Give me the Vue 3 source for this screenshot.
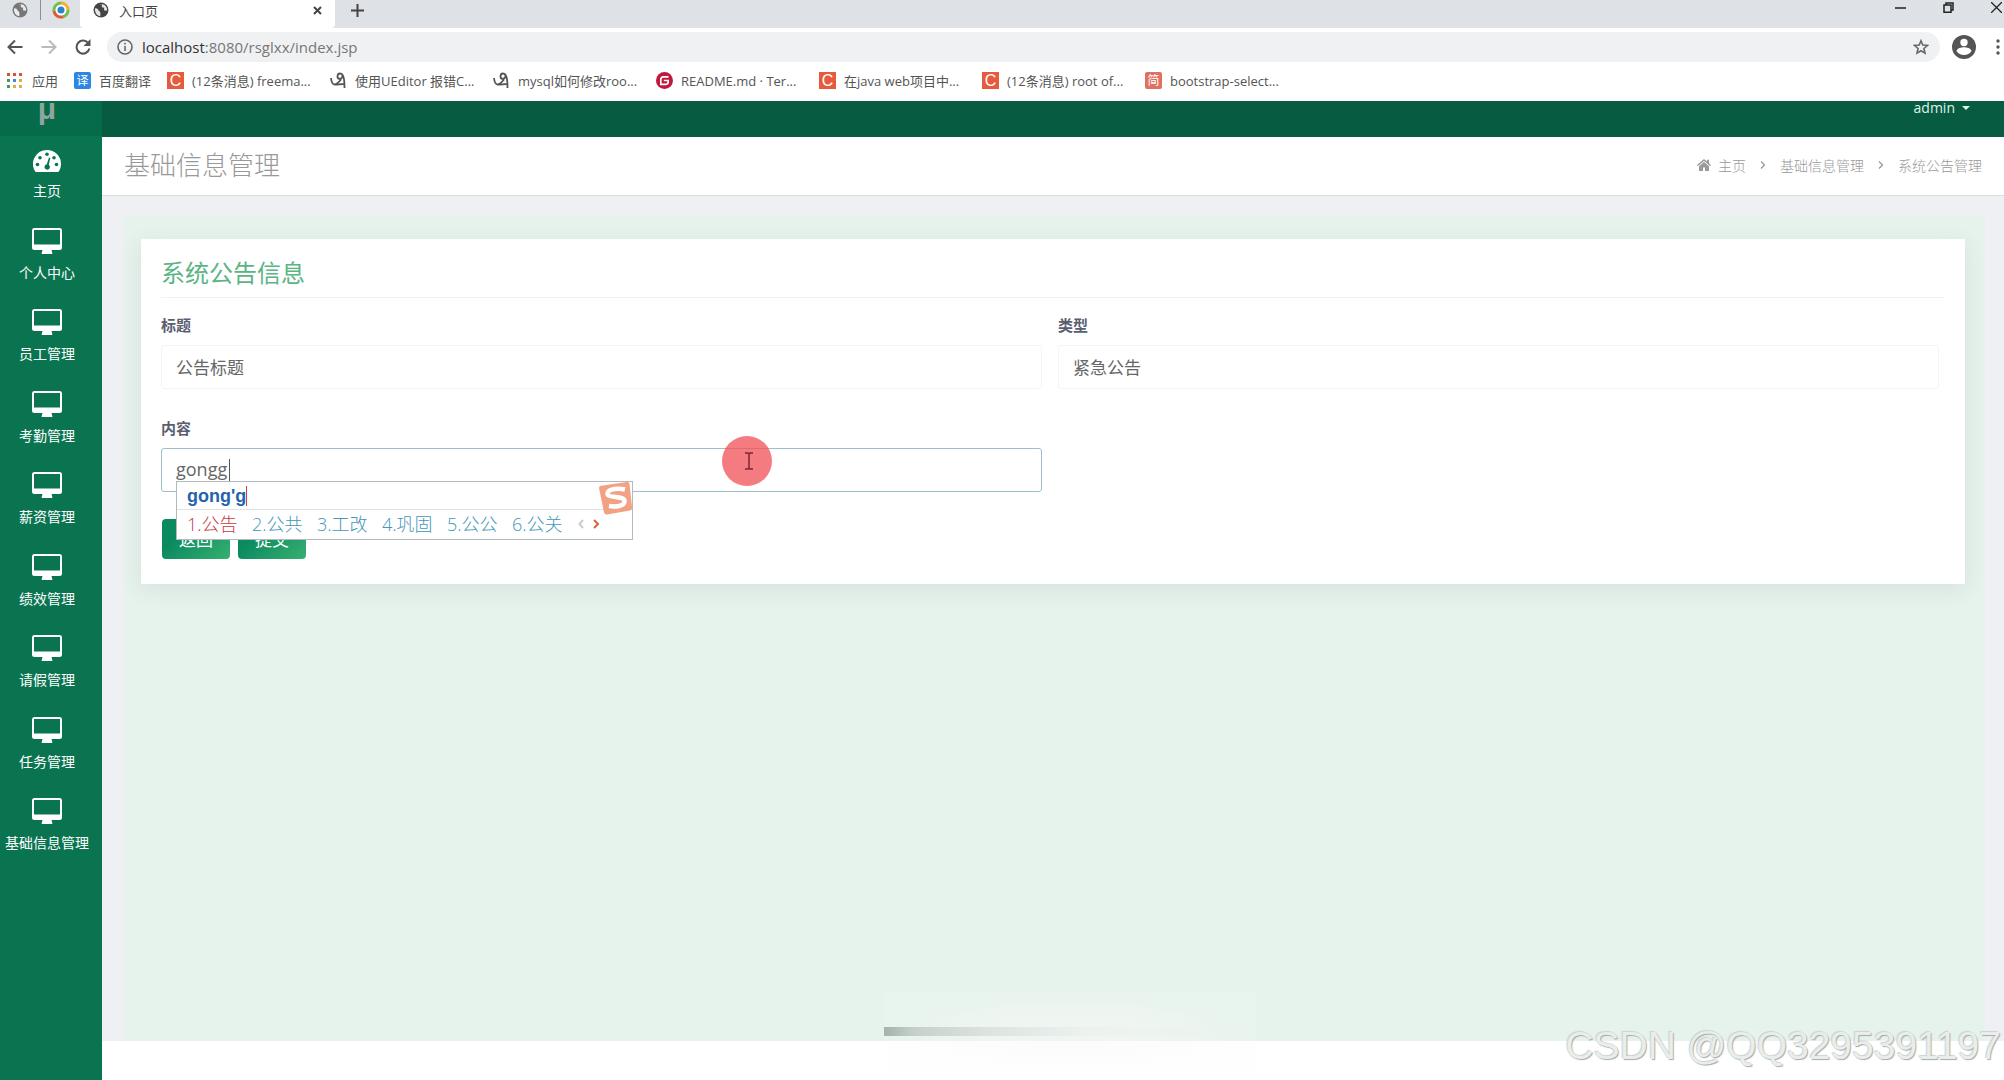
<script setup>
import { ref } from 'vue'

const title = ref('公告标题')
const type = ref('紧急公告')
const content = ref('gongg')

const menu = ['个人中心', '员工管理', '考勤管理', '薪资管理', '绩效管理', '请假管理', '任务管理', '基础信息管理']

const bookmarks = [
  { icon: 'csdn', text: '(12条消息) freema...' },
  { icon: 'script', text: '使用UEditor 报错C...' },
  { icon: 'script', text: 'mysql如何修改roo...' },
  { icon: 'gitee', text: 'README.md · Ter...' },
  { icon: 'csdn', text: '在java web项目中...' },
  { icon: 'csdn', text: '(12条消息) root of...' },
  { icon: 'jian', text: 'bootstrap-select...' }
]

const appColors = ['#d9503f', '#d9503f', '#d9503f', '#3f9c6a', '#4a86d8', '#e0b03a', '#3f9c6a', '#e0b03a', '#e0b03a']
const candidates = ['公告', '公共', '工改', '巩固', '公公', '公关']
</script>

<template>
  <div class="window">
    <svg class="defs" width="0" height="0" aria-hidden="true">
      <symbol id="globe" viewBox="0 0 16 16">
        <circle cx="8" cy="8" r="7.5" fill="currentColor" />
        <path d="M2 6.5C3.5 6 5 7 5.5 8.200s1.500 1 1.800 2.300-.3 2.500.2 3.700C4 14 1.600 11 2 6.500zM6 2.200c1 .3 2.300-.2 3 .6s-.8 1.500-.3 2.200 1.800.2 2.300 1-.5 2 .5 2.500 1.800-.5 2.700.2C14.500 5 11.500 1 6 2.200z" fill="#fff" opacity=".85" />
      </symbol>
      <symbol id="monitor" viewBox="0 0 30 26">
        <path d="M2.500 0h25A2.500 2.500 0 0 1 30 2.500v17a2.500 2.500 0 0 1-2.500 2.500H19.500l.8 3v1H9.700v-1l.8-3H2.500A2.500 2.500 0 0 1 0 19.500v-17A2.500 2.500 0 0 1 2.500 0zM2 2v14.500h26V2z" fill="currentColor" fill-rule="evenodd" />
      </symbol>
    </svg>

    <header class="chrome">
      <div class="tabs">
        <div class="pinned"><svg width="16" height="16" class="dim"><use href="#globe" /></svg></div>
        <div class="pinned split">
          <svg width="18" height="18" viewBox="0 0 18 18" fill="none" stroke-width="3">
            <circle cx="9" cy="9" r="8" fill="#fff" stroke="none" />
            <path d="M2 10A7 7 0 0 1 9 2" stroke="#6fbf52" />
            <path d="M9 2a7 7 0 0 1 7 7" stroke="#f0b429" />
            <path d="M16 9a7 7 0 0 1-5 6.700" stroke="#6fbf52" />
            <path d="M11 15.700A7 7 0 0 1 2 10" stroke="#e2592f" />
            <circle cx="9" cy="9" r="3.500" fill="#2f80d0" />
          </svg>
        </div>
        <div class="tab">
          <svg width="16" height="16"><use href="#globe" /></svg>
          <span>入口页</span>
          <button class="plain" aria-label="关闭标签页">
            <svg width="9" height="9" viewBox="0 0 9 9" stroke="currentColor" stroke-width="2"><path d="M1 1l7 7M8 1L1 8" /></svg>
          </button>
        </div>
        <button class="plain add" aria-label="新标签页">
          <svg width="13" height="13" viewBox="0 0 13 13" stroke="currentColor" stroke-width="2"><path d="M6.500 0v13M0 6.500h13" /></svg>
        </button>
        <div class="controls">
          <button class="plain" aria-label="最小化"><svg width="11" height="11" viewBox="0 0 11 11" stroke="currentColor" stroke-width="1.500"><path d="M0 6h11" /></svg></button>
          <button class="plain" aria-label="还原"><svg width="11" height="11" viewBox="0 0 11 11" fill="none" stroke="currentColor" stroke-width="1.500"><path d="M1 3h7v7.200H1zM3 3V1h7v7H8" /></svg></button>
          <button class="plain" aria-label="关闭"><svg width="11" height="11" viewBox="0 0 11 11" stroke="currentColor" stroke-width="1.300"><path d="M0 0l11 11M11 0L0 11" /></svg></button>
        </div>
      </div>

      <div class="toolbar">
        <div class="nav">
          <button class="plain" aria-label="后退"><svg width="16" height="16" viewBox="0 0 16 16" fill="none" stroke="currentColor" stroke-width="2"><path d="M15.500 8H2M8 1.500L1.500 8 8 14.500" /></svg></button>
          <button class="plain off" aria-label="前进"><svg width="16" height="16" viewBox="0 0 16 16" fill="none" stroke="currentColor" stroke-width="2"><path d="M.5 8H14M8 1.500L14.500 8 8 14.500" /></svg></button>
          <button class="plain" aria-label="刷新"><svg width="16" height="16" viewBox="0 0 16 16" fill="none"><path d="M13.500 4.500A6.500 6.500 0 1 0 14.400 9.600" stroke="currentColor" stroke-width="2" /><path d="M15.500 0v7H8.500z" fill="currentColor" /></svg></button>
        </div>
        <div class="address">
          <svg width="16" height="16" viewBox="0 0 16 16" fill="none" stroke="currentColor" stroke-width="1.600"><circle cx="8" cy="8" r="7" /><path d="M8 7v5M8 3.800v1.700" /></svg>
          <span class="url"><b>localhost</b>:8080/rsglxx/index.jsp</span>
          <svg width="16" height="16" viewBox="0 0 16 16" fill="none" stroke="currentColor" stroke-width="1.600"><path d="M8 1.800l1.800 4.300 4.700.4-3.600 3 1.100 4.600L8 11.700l-4 2.400 1.100-4.600-3.600-3 4.700-.4z" /></svg>
        </div>
        <svg class="avatar" width="24" height="24" viewBox="0 0 24 24"><circle cx="12" cy="12" r="12" fill="currentColor" /><circle cx="12" cy="7.500" r="3.700" fill="#fff" /><path d="M4.500 16c1-3 4.500-3.700 7.500-3.700s6.500.7 7.500 3.700c-1.500 2.500-4.500 4-7.500 4s-6-1.500-7.500-4z" fill="#fff" /></svg>
        <svg class="dots" width="4" height="16" viewBox="0 0 4 16" fill="currentColor"><circle cx="2" cy="2" r="1.700" /><circle cx="2" cy="8" r="1.700" /><circle cx="2" cy="14" r="1.700" /></svg>
      </div>

      <nav class="bookmarks">
        <a href="#" class="apps">
          <span class="grid"><i v-for="(c, i) in appColors" :key="i" :style="{ background: c }"></i></span>应用
        </a>
        <a href="#" class="fanyi"><span class="fav blue">译</span>百度翻译</a>
        <a v-for="(b, i) in bookmarks" :key="i" href="#" class="mark">
          <span v-if="b.icon === 'csdn'" class="fav csdn">C</span>
          <span v-else-if="b.icon === 'jian'" class="fav jian">简</span>
          <svg v-else-if="b.icon === 'gitee'" width="17" height="17" viewBox="0 0 17 17"><circle cx="8.500" cy="8.500" r="8.500" fill="#c0183a" /><path d="M12.500 4.800H7.300a2.500 2.500 0 0 0-2.500 2.500v5h5.200a2.200 2.200 0 0 0 2.200-2.200V8.500H7.800" fill="none" stroke="#fff" stroke-width="1.700" /></svg>
          <svg v-else width="17" height="17" viewBox="0 0 17 17" fill="none" stroke="#555" stroke-width="1.800"><path d="M1 6c.3 3 1.300 6.500 3.500 6.500S9 10 11 7.500M14.500 16C14.500 11 14.500 1.500 10 1.500 7 1.500 6.500 6.500 9.500 6.800S13 3.500 12 2.700M4.500 12.500c2.500.2 6-.5 9-.5" /></svg>
          <span>{{ b.text }}</span>
        </a>
      </nav>
    </header>

    <div class="app">
      <aside class="sidebar">
        <div class="logo"><span>μ</span></div>
        <nav class="menu">
          <a href="#">
            <svg width="28" height="22" viewBox="0 0 28 22">
              <path d="M14 0a14 14 0 0 1 14 14c0 2.800-.8 5.400-2.200 7.500-.2.300-.5.500-.9.500H3.100c-.4 0-.7-.2-.9-.5A14 14 0 0 1 14 0z" fill="currentColor" />
              <g fill="#0a7450"><circle cx="4.500" cy="14.500" r="1.800" /><circle cx="7" cy="7.700" r="1.800" /><circle cx="14" cy="4.300" r="1.800" /><circle cx="21" cy="7.700" r="1.800" /><circle cx="23.500" cy="14.500" r="1.800" /><path d="M16 7.500l1.300.4-1.500 6.900a2.700 2.700 0 1 1-2-.5z" /></g>
            </svg>
            <span>主页</span>
          </a>
          <a v-for="m in menu" :key="m" href="#">
            <svg width="30" height="26"><use href="#monitor" /></svg>
            <span>{{ m }}</span>
          </a>
        </nav>
      </aside>

      <div class="main">
        <div class="topbar"><button class="plain user">admin<i class="caret-down"></i></button></div>
        <div class="heading">
          <h1>基础信息管理</h1>
          <nav class="crumbs">
            <svg width="14" height="12" viewBox="0 0 14 12" fill="currentColor"><path d="M7 0L0 6l1 1 6-5 6 5 1-1-2-1.700V.8h-2v1.800zM2 7.300V12h4V8.500h2V12h4V7.300L7 3z" /></svg>
            <a href="#">主页</a>
            <svg class="sep" width="6" height="8" viewBox="0 0 6 8" fill="none" stroke="currentColor" stroke-width="1.300"><path d="M1 .5L4.500 4 1 7.500" /></svg>
            <a href="#">基础信息管理</a>
            <svg class="sep" width="6" height="8" viewBox="0 0 6 8" fill="none" stroke="currentColor" stroke-width="1.300"><path d="M1 .5L4.500 4 1 7.500" /></svg>
            <a href="#">系统公告管理</a>
          </nav>
        </div>

        <div class="body">
          <div class="panel">
            <form class="card" @submit.prevent>
              <h2>系统公告信息</h2>
              <div class="fields">
                <div class="field">
                  <label for="title">标题</label>
                  <input id="title" v-model="title" type="text" />
                </div>
                <div class="field">
                  <label for="type">类型</label>
                  <input id="type" v-model="type" type="text" />
                </div>
                <div class="field">
                  <label for="content">内容</label>
                  <div class="editing">
                    <input id="content" v-model="content" class="focused" type="text" />
                    <i class="text-caret"></i>
                    <div class="pointer">
                      <svg width="10" height="18" viewBox="0 0 10 18" fill="none" stroke="#7d2430" stroke-width="1.500"><path d="M1 1h3l1 1 1-1h3M5 2v14M1 17h3l1-1 1 1h3" /></svg>
                    </div>
                    <div class="ime">
                      <div class="typed">gong'g<i></i></div>
                      <ol>
                        <li v-for="(c, i) in candidates" :key="i">{{ i + 1 }}.{{ c }}</li>
                        <li class="pager">
                          <svg width="24" height="10" viewBox="0 0 24 10" fill="none" stroke-width="2"><path d="M6 1L2.500 5 6 9" stroke="#ccc" /><path d="M17 1l4 4-4 4" stroke="#d9653b" /></svg>
                        </li>
                      </ol>
                      <svg class="sogou" width="34" height="33" viewBox="0 0 34 33">
                        <path d="M1 6Q1 4 3 3.700L29 0q2-.2 2.500 1.800L34 25q.2 3-2 3.500L9 32.500q-2.500.4-3-2z" fill="#f2a183" />
                        <path d="M27 7.500C21 6 10 6.500 9.500 11.500s17 2 17 7.500-9 6-15.500 5" fill="none" stroke="#fff" stroke-width="4.500" />
                      </svg>
                    </div>
                  </div>
                </div>
              </div>
              <div class="actions">
                <button type="button">返回</button>
                <button type="submit">提交</button>
              </div>
            </form>
          </div>
        </div>
        <footer class="foot"></footer>
      </div>
    </div>

    <div class="progress"><i></i></div>
    <div class="watermark">CSDN @QQ3295391197</div>
  </div>
</template>

<style>
body {
  margin: 0;
}
</style>

<style scoped>
* {
  box-sizing: border-box;
}
.window {
  position: relative;
  display: flex;
  flex-direction: column;
  min-height: 100vh;
  overflow: hidden;
  background: #fff;
  font-family: "Open Sans", "Noto Sans CJK SC", sans-serif;
  color: #555;
}
.defs {
  position: absolute;
}
svg {
  display: block;
  flex: none;
}
a {
  color: inherit;
  text-decoration: none;
}
.plain {
  display: flex;
  align-items: center;
  padding: 0;
  border: 0;
  background: none;
  color: inherit;
  font: inherit;
}

/* browser frame */
.tabs {
  display: flex;
  height: 28px;
  padding-bottom: 8px;
  background: #dee1e6;
  color: #444;
}
.pinned {
  display: flex;
  align-items: center;
  justify-content: center;
  width: 40px;
}
.split {
  border-left: 1px solid #8b8e92;
}
.dim {
  color: #777;
}
.tab {
  display: flex;
  align-items: center;
  gap: 10px;
  width: 255px;
  height: 28px;
  padding: 0 13px 8px;
  border-radius: 0 0 4px 4px;
  background: #fff;
  font-size: 13px;
}
.tab button {
  margin-left: auto;
}
.add {
  margin-left: 16px;
}
.controls {
  display: flex;
  gap: 37px;
  margin: 0 2px 6px auto;
  color: #222;
}
.toolbar {
  display: flex;
  align-items: center;
  height: 38px;
  padding: 0 4px 0 7px;
}
.nav {
  display: flex;
  gap: 18px;
  width: 100px;
}
.off {
  color: #bbb;
}
.address {
  display: flex;
  flex: 1;
  align-items: center;
  gap: 9px;
  height: 30px;
  padding: 0 11px 0 10px;
  border-radius: 15px;
  background: #f0f1f3;
  color: #666;
  font-size: 15px;
}
.url {
  flex: 1;
  color: #777;
}
.url b {
  color: #333;
  font-weight: 400;
}
.avatar {
  margin: 0 20px 0 12px;
}
.bookmarks {
  display: flex;
  align-items: center;
  height: 35px;
  padding: 0 7px 6px;
  font-size: 13px;
  white-space: nowrap;
}
.bookmarks a {
  display: flex;
  align-items: center;
  gap: 8px;
}
.bookmarks .apps {
  gap: 10px;
  width: 67px;
}
.bookmarks .fanyi {
  width: 93px;
}
.bookmarks .mark {
  width: 163px;
}
.grid {
  display: grid;
  grid-template-columns: repeat(3, 3px);
  gap: 3px;
}
.grid i {
  height: 3px;
}
.fav {
  width: 17px;
  height: 17px;
  color: #fff;
  font-size: 12px;
  line-height: 17px;
  text-align: center;
}
.blue {
  border-radius: 2px;
  background: #2b87e3;
}
.csdn {
  background: #e65a3e;
  font-family: "Liberation Sans", sans-serif;
  font-size: 16px;
}
.jian {
  border-radius: 2px;
  background: #e0705f;
}

/* application */
.app {
  display: flex;
  flex: 1;
}
.sidebar {
  width: 102px;
  padding-right: 8px;
  background: #0a7450;
  color: #fff;
}
.logo {
  height: 35px;
  margin-right: -8px;
  padding-right: 8px;
  overflow: hidden;
  background: #066b4a;
  color: #8fa69c;
  font: 700 30px/16px "Liberation Sans", sans-serif;
  text-align: center;
}
.menu {
  display: grid;
  grid-auto-rows: 1fr;
  height: 733px;
}
.menu a {
  display: flex;
  flex-direction: column;
  align-items: center;
  justify-content: flex-end;
  gap: 9px;
  padding-bottom: 16px;
  font-size: 14px;
  line-height: 20px;
  white-space: nowrap;
}
.main {
  display: flex;
  flex: 1;
  flex-direction: column;
  min-width: 0;
}
.topbar {
  display: flex;
  align-items: flex-start;
  justify-content: flex-end;
  height: 36px;
  padding-right: 34px;
  background: #075b40;
}
.user {
  gap: 7px;
  color: #dff2ea;
  font-size: 14px;
  line-height: 14px;
}
.caret-down {
  border: 4px solid transparent;
  border-top-color: currentColor;
  border-bottom: 0;
}
.heading {
  display: flex;
  align-items: center;
  justify-content: space-between;
  height: 59px;
  padding: 0 22px 2px;
  border-bottom: 1px solid #d8dcdc;
}
h1 {
  margin: 0;
  color: #999;
  font-size: 26px;
  font-weight: 300;
  line-height: 30px;
}
.crumbs {
  display: flex;
  align-items: center;
  gap: 7px;
  color: #999;
  font-size: 14px;
  font-weight: 300;
}
.sep {
  margin: 0 7px;
}
.body {
  display: flex;
  flex: 1;
  padding: 20px 19px 0 22px;
  background: #eff0f4;
}
.panel {
  flex: 1;
  padding: 23px 20px 0 17px;
  background: #e6f3ec;
}
.card {
  padding: 20px 20px 25px;
  background: #fff;
  box-shadow: 0 5px 20px rgba(69, 65, 110, 0.1);
}
h2 {
  margin: 0 0 17px;
  padding-bottom: 10px;
  border-bottom: 1px solid #f2f2f2;
  color: #5bb583;
  font-size: 24px;
  font-weight: 400;
  line-height: 28px;
}
.fields {
  display: grid;
  grid-template-columns: 1fr 1fr;
  gap: 29px 16px;
  padding-right: 6px;
}
.field {
  display: flex;
  flex-direction: column;
  gap: 10px;
}
label {
  color: #5a5e70;
  font-size: 15px;
  font-weight: 600;
  line-height: 20px;
}
.field input {
  display: block;
  width: 100%;
  height: 44px;
  padding: 0 14px 2px;
  border: 1px solid #f3f4f5;
  border-radius: 3px;
  outline: 0;
  background: #fff;
  color: #666;
  font: inherit;
  font-size: 17px;
}
.field .focused {
  border-color: #9dbfc9;
  font-size: 18px;
}
.editing {
  position: relative;
}
.text-caret {
  position: absolute;
  top: 11px;
  left: 68px;
  width: 1px;
  height: 22px;
  background: #555;
}
.pointer {
  position: absolute;
  top: -12px;
  left: 561px;
  display: flex;
  align-items: center;
  justify-content: center;
  width: 50px;
  height: 50px;
  padding-left: 4px;
  border-radius: 50%;
  background: rgba(240, 80, 85, 0.75);
}
.ime {
  position: absolute;
  top: 33px;
  left: 15px;
  width: 457px;
  border: 1px solid #b4b9bd;
  background: #fff;
}
.typed {
  display: flex;
  align-items: center;
  height: 28px;
  padding-left: 10px;
  border-bottom: 1px solid #e2e2e2;
  color: #2463ad;
  font: 700 18px/28px "Liberation Sans", sans-serif;
}
.typed i {
  width: 1px;
  height: 20px;
  background: #d04040;
}
.ime ol {
  display: flex;
  align-items: center;
  height: 29px;
  margin: 0;
  padding: 0 0 2px 10px;
  list-style: none;
  color: #4596b8;
  font-size: 18px;
  font-weight: 300;
  line-height: 24px;
}
.ime li {
  flex: none;
  width: 65px;
}
.ime li:first-child {
  color: #c63b3b;
}
.ime .pager {
  width: 24px;
}
.sogou {
  position: absolute;
  top: 0;
  right: 0;
}
.actions {
  display: flex;
  gap: 8px;
  margin: 27px 0 0 1px;
}
.actions button {
  width: 68px;
  height: 40px;
  padding: 0 0 2px;
  border: 0;
  border-radius: 4px;
  background: linear-gradient(135deg, #0b8a60 30%, #36b070);
  color: #fff;
  font: inherit;
  font-size: 17px;
}
.foot {
  height: 39px;
}

/* overlays */
.progress {
  position: absolute;
  bottom: 8px;
  left: 884px;
  width: 372px;
  height: 80px;
  padding-top: 35px;
  background: radial-gradient(closest-side, rgba(248, 248, 248, 0.5) 40%, rgba(248, 248, 248, 0.1));
}
.progress i {
  display: block;
  height: 9px;
  background: linear-gradient(90deg, #a3b2ab, #c6d0cb 8%, #dde4e0 28%, rgba(236, 241, 238, 0.8) 55%, rgba(240, 244, 242, 0));
}
.watermark {
  position: absolute;
  right: 3px;
  bottom: 12px;
  color: #e9eeec;
  font: 39px/44px "Liberation Sans", sans-serif;
  text-shadow: 1px 1px 1px #a3aaa7, -1px -1px 1px #ccd2cf;
}
</style>
